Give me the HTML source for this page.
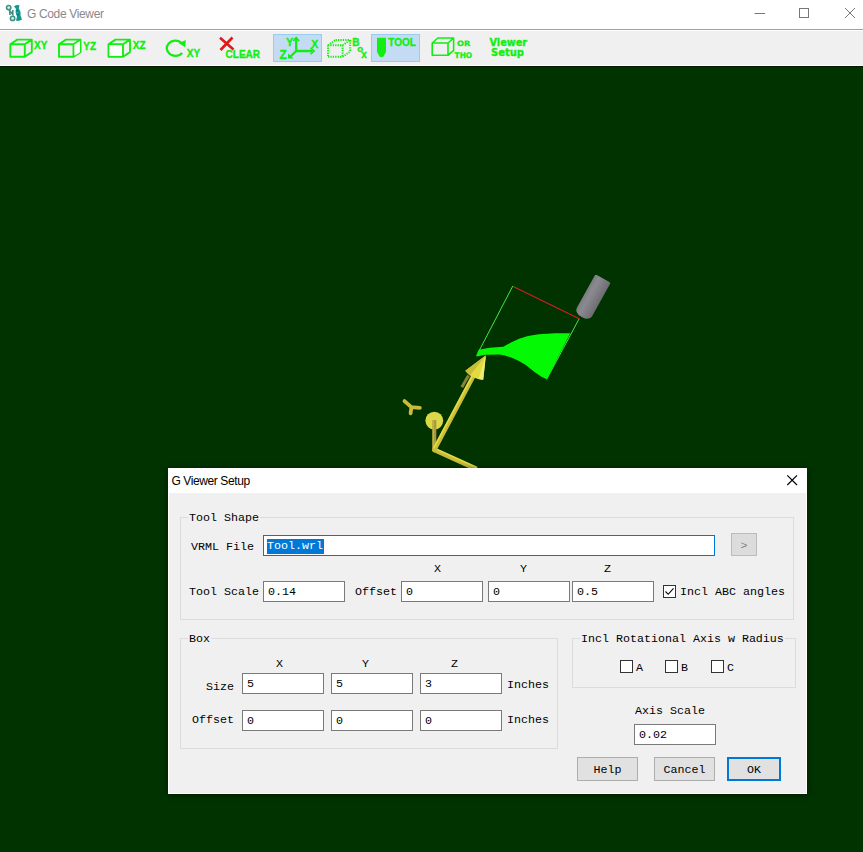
<!DOCTYPE html>
<html><head><meta charset="utf-8"><title>G Code Viewer</title>
<style>
*{box-sizing:border-box;margin:0;padding:0}
html,body{width:863px;height:852px;overflow:hidden;background:#003300;font-family:"Liberation Sans",sans-serif}
.abs{position:absolute}
#titlebar{left:0;top:0;width:863px;height:29px;background:#fff}
#titlebar .t{left:27px;top:7px;font-size:12px;color:#8a8a8a;white-space:nowrap;letter-spacing:-0.35px}
#toolbar{left:0;top:29px;width:863px;height:37px;background:#f0f0f0;border-top:1px solid #a0a0a0;border-bottom:1px solid #fff;box-shadow:inset 0 1px 0 #fff}
#view{left:0;top:66px;width:863px;height:786px;background:#003300;border-top:1px solid #001c00}
.tb{font-family:"DejaVu Sans","Liberation Sans",sans-serif;font-weight:bold;color:#1ee61e;font-size:9px;white-space:nowrap;line-height:9px}
.sel{background:#c2dcf3;border:1px solid #99c9ef}
#dlg{left:168px;top:468px;width:639px;height:326px;background:#f0f0f0;box-shadow:inset 0 0 0 1px #fff,0 1px 7px rgba(0,0,0,.45);font-family:"Liberation Mono",monospace;font-size:11.67px;color:#000}
#dlg .title{left:0;top:0;width:639px;height:25px;background:#fff}
#dlg .title span{position:absolute;left:3.5px;top:5.5px;font-family:"Liberation Sans",sans-serif;font-size:12px;color:#000;white-space:nowrap;letter-spacing:-0.4px}
.grp{border:1px solid #dcdcdc}
.lbl{white-space:nowrap;line-height:14px;height:14px;margin-top:1px}
.glbl{background:#f0f0f0;white-space:nowrap;line-height:14px;height:14px;padding:0 1px;margin-top:1px}
.inp{background:#fff;border:1px solid #7a7a7a;height:21px;line-height:21px;padding-left:4px;white-space:nowrap}
.btn{background:#e1e1e1;border:1px solid #adadad;height:23px;line-height:25px;text-align:center}
.chk{width:13px;height:13px;background:#fff;border:1px solid #333}
</style></head><body>
<div id="titlebar" class="abs">
  <svg class="abs" style="left:0;top:0" width="28" height="28" viewBox="0 0 28 28">
    <circle cx="8.700" cy="7.600" r="2.200" fill="#c8f4ee" stroke="#3f8f86" stroke-width="1.500"/>
    <path d="M9.500 9.500L10 15M10 11L12.800 14.500V10" fill="none" stroke="#3f8f86" stroke-width="1.600"/>
    <circle cx="12.600" cy="18.400" r="2.200" fill="#c8f4ee" stroke="#3f8f86" stroke-width="1.500"/>
    <path d="M14 6.200Q16.800 4.500 19.500 5.200L18.800 8.500Q21.500 12 20.500 15.500L22 19.500Q19 21.500 16 20.600L17 16.500Q14.800 12 16 9z" fill="#13988f"/>
    <path d="M17 10Q18.500 12.500 17.800 15.500" stroke="#0b6f7c" stroke-width="1.600" fill="none"/>
    <circle cx="17.600" cy="12.500" r="0.900" fill="#35c9c0"/>
  </svg>
  <div class="abs t">G Code Viewer</div>
  <svg class="abs" style="left:740px;top:0" width="123" height="29" viewBox="0 0 123 29">
    <path d="M14.5 13.5H25" stroke="#777" stroke-width="1" fill="none"/>
    <rect x="59.500" y="8.500" width="9" height="9" stroke="#777" stroke-width="1" fill="none"/>
    <path d="M105 8L115 18M115 8L105 18" stroke="#777" stroke-width="1" fill="none"/>
  </svg>
</div>
<div id="toolbar" class="abs"><!--TB--><svg class="abs" style="left:0;top:0" width="863" height="36" viewBox="0 0 863 36"><g transform="translate(0,-30)">
<rect x="273.5" y="34.5" width="48" height="27" fill="#c3dcf4" stroke="#9ccbf0"/>
<rect x="371.5" y="34.5" width="48" height="27" fill="#c3dcf4" stroke="#9ccbf0"/>
<path d="M10.3 44.3h14.5v12.5h-14.5z M10.3 44.3l7 -4.7h14.5v12.5l-7 4.7 M24.8 44.3l7 -4.7" fill="none" stroke="#12ee12" stroke-width="1.9" stroke-linejoin="round"/>
<text x="34" y="48.8" font-family="Liberation Sans, sans-serif" font-weight="bold" stroke="#12ee12" stroke-width="0.35" font-size="10" fill="#12ee12">XY</text>
<path d="M59 44.3h14.5v12.5h-14.5z M59 44.3l7 -4.7h14.5v12.5l-7 4.7 M73.5 44.3l7 -4.7" fill="none" stroke="#12ee12" stroke-width="1.9" stroke-linejoin="round"/>
<path d="M74.600 44.600l5.400 -3.600v11.200l-5.400 3.600z" fill="#fff"/>
<text x="83.3" y="49.6" font-family="Liberation Sans, sans-serif" font-weight="bold" stroke="#12ee12" stroke-width="0.35" font-size="10" fill="#12ee12">YZ</text>
<path d="M108.5 44.3h14.5v12.5h-14.5z M108.5 44.3l7 -4.7h14.5v12.5l-7 4.7 M123.0 44.3l7 -4.7" fill="none" stroke="#12ee12" stroke-width="1.9" stroke-linejoin="round"/>
<rect x="109.500" y="45.300" width="12.500" height="10.500" fill="#fff"/>
<text x="132.800" y="49.400" font-family="Liberation Sans, sans-serif" font-weight="bold" stroke="#12ee12" stroke-width="0.35" font-size="10" fill="#12ee12">XZ</text>
<path d="M181.200 42.700A8.600 7.600 0 1 0 182.200 52.900" fill="none" stroke="#12ee12" stroke-width="2.300"/>
<path d="M179 43.300L185.800 40L185.200 47.200z" fill="#12ee12"/>
<text x="186.8" y="56.9" font-family="Liberation Sans, sans-serif" font-weight="bold" stroke="#12ee12" stroke-width="0.35" font-size="10" fill="#12ee12">XY</text>
<path d="M220 37.800L233.500 49.500M232.500 37.500L220.500 50" stroke="#e01818" stroke-width="2.600" fill="none"/>
<text x="225.6" y="57.7" font-family="Liberation Sans, sans-serif" font-weight="bold" stroke="#12ee12" stroke-width="0.35" font-size="10" fill="#12ee12">CLEAR</text>
<path d="M296.200 38.500V51H312.500" fill="none" stroke="#12ee12" stroke-width="2.300"/>
<path d="M296.200 51L290 57" fill="none" stroke="#12ee12" stroke-width="2.400"/>
<path d="M293.200 41L296.200 37.500L299.200 41" fill="none" stroke="#12ee12" stroke-width="1.600"/>
<path d="M310.500 47.800L314.200 51L310.500 54.200" fill="none" stroke="#12ee12" stroke-width="1.600"/>
<path d="M288 53.500V58.500H293.500z" fill="#12ee12"/>
<text x="286" y="45.5" font-family="Liberation Sans, sans-serif" font-weight="bold" stroke="#12ee12" stroke-width="0.35" font-size="11" fill="#12ee12">Y</text>
<text x="311.3" y="47.6" font-family="Liberation Sans, sans-serif" font-weight="bold" stroke="#12ee12" stroke-width="0.35" font-size="10.5" fill="#12ee12">X</text>
<text x="279.5" y="58.7" font-family="Liberation Sans, sans-serif" font-weight="bold" stroke="#12ee12" stroke-width="0.35" font-size="12" fill="#12ee12">Z</text>
<path d="M328 45.2H342.6 M328 56.800000000000004H342.6 M328 45.2V56.800000000000004 M342.6 45.2V56.800000000000004 M328 45.2L335.6 40.0 M342.6 45.2L350.20000000000005 40.0 M342.6 56.800000000000004L350.20000000000005 51.6 M335.6 40.0H350.20000000000005 M350.20000000000005 40.0V51.6" fill="none" stroke="#12ee12" stroke-width="1.900" stroke-dasharray="1.300 1.100"/>
<text x="352.2" y="46.4" font-family="Liberation Sans, sans-serif" font-weight="bold" stroke="#12ee12" stroke-width="0.35" font-size="10" fill="#12ee12">B</text>
<text x="357.3" y="52" font-family="Liberation Sans, sans-serif" font-weight="bold" stroke="#12ee12" stroke-width="0.35" font-size="9.5" fill="#12ee12">o</text>
<text x="361.3" y="58.4" font-family="Liberation Sans, sans-serif" font-weight="bold" stroke="#12ee12" stroke-width="0.35" font-size="10" fill="#12ee12">x</text>
<path d="M377 37.800H386V52L383.500 56.500Q381.500 57.800 379.500 56.500L377 52z" fill="#12ee12"/>
<text x="388.3" y="46" font-family="Liberation Sans, sans-serif" font-weight="bold" stroke="#12ee12" stroke-width="0.35" font-size="10" fill="#12ee12">TOOL</text>
<path d="M432.2 43h15.8v12.3h-15.8z M432.2 43l5.6 -5h15.8v12.3l-5.6 5 M448.0 43l5.6 -5" fill="none" stroke="#12ee12" stroke-width="1.600" stroke-linejoin="round"/>
<text x="457" y="45.900" font-family="DejaVu Sans, sans-serif" font-weight="bold" stroke="#12ee12" stroke-width="0.3" font-size="7.3" fill="#12ee12" textLength="13.300" lengthAdjust="spacingAndGlyphs">OR</text>
<text x="454.600" y="57.600" font-family="DejaVu Sans, sans-serif" font-weight="bold" stroke="#12ee12" stroke-width="0.3" font-size="7.8" fill="#12ee12" textLength="17.600" lengthAdjust="spacingAndGlyphs">THO</text>
<text x="489.5" y="46" font-family="DejaVu Sans, sans-serif" font-weight="bold" stroke="#12ee12" stroke-width="0.35" font-size="9.8" fill="#12ee12" textLength="37.500" lengthAdjust="spacingAndGlyphs">Viewer</text>
<text x="491" y="55.6" font-family="DejaVu Sans, sans-serif" font-weight="bold" stroke="#12ee12" stroke-width="0.35" font-size="9.8" fill="#12ee12" textLength="33" lengthAdjust="spacingAndGlyphs">Setup</text>
</g></svg><!--/TB--></div>
<div id="view" class="abs"><!--SC--><svg class="abs" style="left:0;top:-1px" width="863" height="786" viewBox="0 66 863 786">
<defs>
<linearGradient id="tg" x1="0" y1="0" x2="1" y2="0"><stop offset="0" stop-color="#7c7c82"/><stop offset="0.3" stop-color="#8a8a90"/><stop offset="0.6" stop-color="#7e7e84"/><stop offset="1" stop-color="#6c6c72"/></linearGradient>
</defs>
<path d="M512.800 286L479.500 350" stroke="#40e840" stroke-width="1" fill="none"/>
<path d="M579.200 318.700L546.700 379.200" stroke="#40e840" stroke-width="1" fill="none"/>
<path d="M513.200 286.500L579.200 318.700" stroke="#d02020" stroke-width="1.200" fill="none"/>
<path d="M476.200 355.500L478.700 349.800L489.500 347.700L503.300 346.700L511 342.500L519.100 338.800L528 336L538.800 334.300L555 333.300L570.300 333.200L546.700 379.200L541 376.500L534.900 372.300L525 364.400L518 360.500L511.200 357.500L505 355.600L499.400 354.600L485.600 354.800L476.700 356.500z" fill="#04fa04"/>
<g transform="translate(595.5,274.2) rotate(29.10)"><path d="M0 1.500Q0 0 1.500 0H15.92Q17.42 0 17.42 1.500V38.01Q17.42 44.01 8.71 44.01Q0 44.01 0 38.01z" fill="url(#tg)"/></g>
<path d="M434.300 450L476 469" stroke="#c8bc3a" stroke-width="4.200" fill="none" stroke-linecap="round"/>
<path d="M435 448.600L477 467.600" stroke="#e2da3e" stroke-width="1.600" fill="none"/>
<circle cx="434.300" cy="420.600" r="8.900" fill="#dcd848"/>
<path d="M434.300 420V450" stroke="#a89a3c" stroke-width="4" fill="none"/>
<path d="M433.300 420V449" stroke="#c4b440" stroke-width="1.500" fill="none"/>
<path d="M461.800 387.300L468.500 375.500" stroke="#8a8238" stroke-width="3" fill="none"/>
<path d="M434.300 450L473.500 376" stroke="#c8bc3a" stroke-width="4.400" fill="none" stroke-linecap="round"/>
<path d="M433.600 448.500L472.500 375.500" stroke="#e2da3e" stroke-width="1.800" fill="none"/>
<path d="M485.900 355.300L465.300 370.800Q472 379.500 483.200 379.800z" fill="#e2da3e"/>
<path d="M485.900 355.300L478.500 379Q481 380 483.200 379.800z" fill="#f0ea70"/>
<path d="M485.900 355.300L465.300 370.800Q467 373.500 470 375.500z" fill="#c8bc3a"/>
<path d="M411.400 407.200L404.500 401.100M411.400 407.200L419.800 407.900M411.400 407.200L410.600 413.300" stroke="#c8bc40" stroke-width="3.800" fill="none" stroke-linecap="round"/>
</svg><!--/SC--></div>
<div id="dlg" class="abs">
  <div class="abs title"><span>G Viewer Setup</span>
    <svg class="abs" style="left:617px;top:6px" width="13" height="13" viewBox="0 0 13 13"><path d="M2.300 1.300L12 11M12 1.300L2.300 11" stroke="#000" stroke-width="1.150" fill="none"/></svg>
  </div>
<!--DLG-->
<div class="abs grp" style="left:12px;top:49px;width:614px;height:103px"></div>
<div class="abs glbl" style="left:20px;top:42px">Tool Shape</div>
<div class="abs lbl" style="left:23px;top:71px">VRML File</div>
<div class="abs inp" style="left:95px;top:67px;width:452px;height:21px;border-color:#0078d7;padding-left:3px"><span style="background:#0078d7;color:#fff;display:inline-block;height:15px;line-height:15px;padding:0 1px 0 0">Tool.wrl</span></div>
<div class="abs btn" style="left:563px;top:65px;width:26px;height:23px;color:#838383;background:#dcdcdc;border-color:#bcbcbc">&gt;</div>
<div class="abs lbl" style="left:266px;top:93px">X</div>
<div class="abs lbl" style="left:352px;top:93px">Y</div>
<div class="abs lbl" style="left:436px;top:93px">Z</div>
<div class="abs lbl" style="left:21px;top:116px">Tool Scale</div>
<div class="abs inp" style="left:95px;top:113px;width:82px;height:21px;">0.14</div>
<div class="abs lbl" style="left:187px;top:116px">Offset</div>
<div class="abs inp" style="left:233px;top:113px;width:82px;height:21px;">0</div>
<div class="abs inp" style="left:320px;top:113px;width:82px;height:21px;">0</div>
<div class="abs inp" style="left:404px;top:113px;width:82px;height:21px;">0.5</div>
<div class="abs chk" style="left:495px;top:117px"><svg width="11" height="11" viewBox="0 0 11 11" style="display:block"><path d="M1.500 5.500L4.200 8.300L9.500 2.300" stroke="#000" stroke-width="1.100" fill="none"/></svg></div>
<div class="abs lbl" style="left:512px;top:116px">Incl ABC angles</div>
<div class="abs grp" style="left:12px;top:170px;width:378px;height:111px"></div>
<div class="abs glbl" style="left:20px;top:163px">Box</div>
<div class="abs lbl" style="left:108px;top:188px">X</div>
<div class="abs lbl" style="left:194px;top:188px">Y</div>
<div class="abs lbl" style="left:283px;top:188px">Z</div>
<div class="abs lbl" style="left:38px;top:211px">Size</div>
<div class="abs inp" style="left:74px;top:205px;width:82px;height:21px;">5</div>
<div class="abs inp" style="left:163px;top:205px;width:82px;height:21px;">5</div>
<div class="abs inp" style="left:252px;top:205px;width:82px;height:21px;">3</div>
<div class="abs lbl" style="left:339px;top:209px">Inches</div>
<div class="abs lbl" style="left:24px;top:244px">Offset</div>
<div class="abs inp" style="left:74px;top:242px;width:82px;height:21px;">0</div>
<div class="abs inp" style="left:163px;top:242px;width:82px;height:21px;">0</div>
<div class="abs inp" style="left:252px;top:242px;width:82px;height:21px;">0</div>
<div class="abs lbl" style="left:339px;top:244px">Inches</div>
<div class="abs grp" style="left:404px;top:170px;width:224px;height:50px"></div>
<div class="abs glbl" style="left:412px;top:163px">Incl Rotational Axis w Radius</div>
<div class="abs chk" style="left:452px;top:192px"></div>
<div class="abs lbl" style="left:468px;top:192px">A</div>
<div class="abs chk" style="left:497px;top:192px"></div>
<div class="abs lbl" style="left:513px;top:192px">B</div>
<div class="abs chk" style="left:543px;top:192px"></div>
<div class="abs lbl" style="left:559px;top:192px">C</div>
<div class="abs lbl" style="left:467px;top:235px">Axis Scale</div>
<div class="abs inp" style="left:466px;top:256px;width:82px;height:21px;">0.02</div>
<div class="abs btn" style="left:409px;top:289px;width:61px;height:24px;">Help</div>
<div class="abs btn" style="left:486px;top:289px;width:61px;height:24px;">Cancel</div>
<div class="abs btn" style="left:559px;top:289px;width:54px;height:24px;border:2px solid #0078d7;line-height:23px">OK</div>
<!--/DLG-->
</div>
</body></html>
